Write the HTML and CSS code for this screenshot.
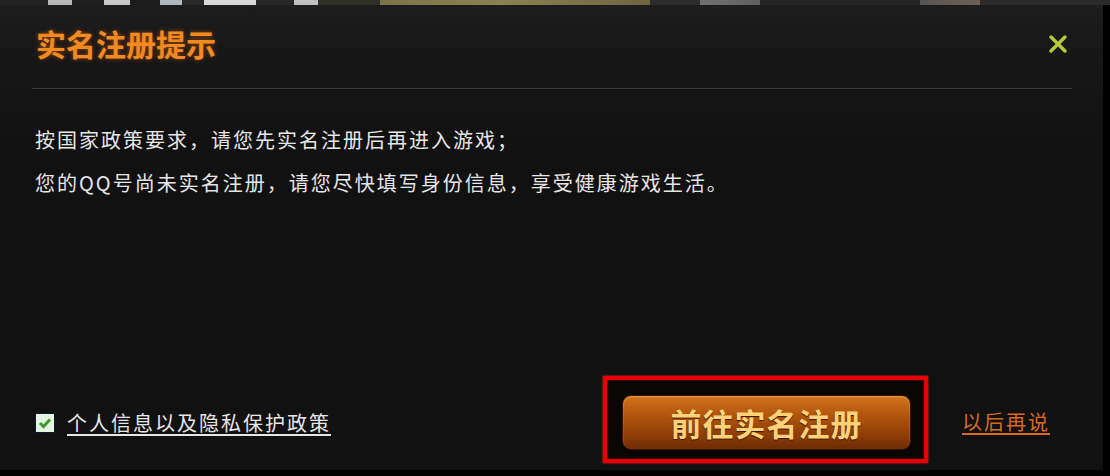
FILE: index.html
```html
<!DOCTYPE html>
<html lang="zh-CN">
<head>
<meta charset="utf-8">
<title>实名注册提示</title>
<link rel="stylesheet" href="styles.css">
</head>
<body>
<div class="strip"></div>
<div class="dialog">
  <div class="header">
    <h1 class="title">实名注册提示</h1>
    <span class="close" aria-label="关闭">
      <svg width="20" height="18" viewBox="0 0 20 18"><path d="M3 2 L17 16 M17 2 L3 16" stroke="#b9c836" stroke-width="3.4" stroke-linecap="round"/></svg>
    </span>
  </div>
  <div class="sep"></div>
  <div class="content">
    <p>按国家政策要求，请您先实名注册后再进入游戏；</p>
    <p>您的QQ号尚未实名注册，请您尽快填写身份信息，享受健康游戏生活。</p>
  </div>
  <div class="footer">
    <label class="agree">
      <span class="check"><svg width="14" height="12" viewBox="0 0 14 12"><path d="M2 6 L5.5 9.5 L12 2.5" fill="none" stroke="#3f9a2c" stroke-width="3"/></svg></span>
      <span class="policy">个人信息以及隐私保护政策</span>
    </label>
    <div class="actions">
      <div class="highlight">
        <button class="go">前往实名注册</button>
      </div>
      <a class="later">以后再说</a>
    </div>
  </div>
</div>
</body>
</html>
```
FILE: styles.css
```css
html, body {
  margin: 0;
  padding: 0;
  background: #000;
  width: 1110px;
  height: 476px;
  overflow: hidden;
  font-family: "Noto Sans CJK SC", "Noto Sans", sans-serif;
}
.strip {
  height: 5px;
  width: 1110px;
  background: linear-gradient(90deg,
    #222 0, #222 48px, #b8b8b8 48px, #b8b8b8 72px, #202020 72px, #202020 104px,
    #c8c8c8 104px, #c8c8c8 130px, #1c1c1c 130px, #1c1c1c 160px, #b0b8c0 160px, #b0b8c0 182px,
    #282828 182px, #282828 204px, #d8d8d8 204px, #d8d8d8 256px, #262626 256px, #262626 294px,
    #c0c0c0 294px, #c0c0c0 318px, #303028 318px, #303028 380px, #7c7448 380px, #8a8250 500px,
    #6c6540 650px, #2c2c2c 650px, #2c2c2c 700px, #707070 700px, #606060 760px, #242424 760px,
    #242424 920px, #5a5450 920px, #6a6058 980px, #2a2a2a 980px);
}
.dialog {
  width: 1103px;
  height: 465px;
  box-sizing: border-box;
  background: linear-gradient(180deg, #1d1d1d 0, #161616 60px, #111 140px, #111 100%);
  display: flex;
  flex-direction: column;
}
.header {
  height: 83px;
  box-sizing: border-box;
  padding: 20px 35px 0 36px;
  display: flex;
  justify-content: space-between;
  align-items: flex-start;
}
.title {
  margin: 0;
  font-size: 30px;
  line-height: 36px;
  font-weight: 700;
  color: #f28a22;
  text-shadow: 0 0 4px rgba(255, 110, 0, 0.55);
}
.close {
  display: block;
  margin-top: 10px;
  width: 20px;
  height: 18px;
}
.close svg { display: block; }
.sep {
  margin: 0 31px 0 32px;
  height: 1px;
  background: #393939;
  border-bottom: 1px solid #0b0b0b;
}
.content {
  padding: 28px 35px 0;
  color: #e6e6e6;
  font-size: 20px;
  letter-spacing: 2px;
  line-height: 43px;
}
.content p { margin: 0; }
.footer {
  margin-top: auto;
  padding: 0 53px 7px 35px;
  display: flex;
  justify-content: space-between;
  align-items: center;
}
.agree {
  display: flex;
  align-items: center;
  gap: 12px;
  padding-top: 7px;
}
.check {
  width: 20px;
  height: 20px;
  box-sizing: border-box;
  background: #e4f6e2;
  border: 1px solid #0b1a30;
  display: flex;
  align-items: center;
  justify-content: center;
}
.policy {
  color: #e6e6e6;
  font-size: 20px;
  letter-spacing: 2px;
  line-height: 26px;
  text-decoration: underline;
  text-underline-offset: 3px;
}
.actions {
  display: flex;
  align-items: center;
  gap: 34px;
}
.highlight {
  border: 4px solid #e80000;
  box-shadow: 0 0 2px #ff2020, inset 0 0 2px #900;
  background: #0a0505;
  padding: 15px 13px 9px 15px;
  display: flex;
}
.go {
  width: 289px;
  height: 55px;
  border: 1px solid #3a1400;
  border-radius: 9px;
  background: linear-gradient(180deg, #d0741c 0, #b85a10 30%, #8e3c06 75%, #6e2c04 100%);
  box-shadow: inset 0 1px 2px rgba(255, 200, 120, 0.5);
  color: #ffd27a;
  font-family: "Noto Sans CJK SC", sans-serif;
  font-size: 31px;
  font-weight: 700;
  letter-spacing: 1px;
  padding: 0;
  text-shadow: 0 1px 1px #3a1400;
}
.later {
  color: #d8691f;
  font-size: 20px;
  letter-spacing: 2px;
  text-decoration: underline;
  text-underline-offset: 3px;
  padding-top: 3px;
}
```
